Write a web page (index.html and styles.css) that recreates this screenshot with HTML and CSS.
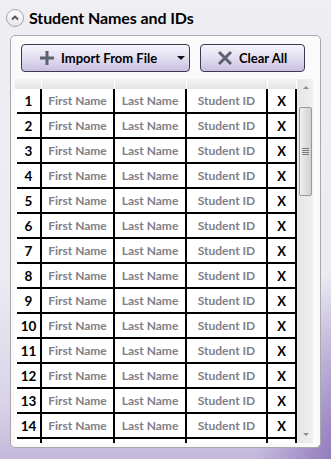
FILE: index.html
```html
<!DOCTYPE html>
<html>
<head>
<meta charset="utf-8">
<link rel="stylesheet" href="styles.css">
</head>
<body>
<div class="page">
  <div class="title-row">
    <span class="collapse">
      <svg width="10" height="8" viewBox="0 0 10 8"><path d="M2 5.5 L5 2.5 L8 5.5" fill="none" stroke="#555" stroke-width="1.8"/></svg>
    </span>
    <span class="title">Student Names and IDs</span>
  </div>
  <div class="panel">
    <div class="buttons">
      <button class="btn btn-import">
        <svg class="ico" width="16" height="16" viewBox="0 0 16 16"><path d="M8 1 V15 M1 8 H15" stroke="#5d6270" stroke-width="3"/></svg>
        <span class="btn-text">Import From File</span>
        <span class="caret"></span>
      </button>
      <button class="btn btn-clear">
        <svg class="ico" width="16" height="16" viewBox="0 0 16 16"><path d="M2 2 L14 14 M14 2 L2 14" stroke="#5d6270" stroke-width="3"/></svg>
        <span class="btn-text">Clear All</span>
      </button>
    </div>
    <div class="grid-wrap">
      <div class="grid">
        <div class="head">
          <div class="hc c1"></div><div class="hc c2"></div><div class="hc c3"></div><div class="hc c4"></div><div class="hc c5"></div>
        </div>
        <div class="rows" id="rows"></div>
      </div>
      <div class="scrollbar">
        <div class="arrow up"></div>
        <div class="track">
          <div class="thumb"><div class="grip"></div></div>
        </div>
        <div class="arrow down"></div>
      </div>
    </div>
  </div>
</div>
<script>
  var rows = document.getElementById('rows');
  var html = '';
  for (var i = 1; i <= 14; i++) {
    html += '<div class="row"><div class="cell c1 num">' + i + '</div><div class="cell c2 ph">First Name</div><div class="cell c3 ph">Last Name</div><div class="cell c4 ph">Student ID</div><div class="cell c5 x">X</div></div>';
  }
  html += '<div class="row"><div class="cell c1"></div><div class="cell c2"></div><div class="cell c3"></div><div class="cell c4"></div><div class="cell c5"></div></div>';
  rows.innerHTML = html;
</script>
</body>
</html>
```

FILE: styles.css
```css
html, body {
  margin: 0;
  padding: 0;
}
body {
  width: 331px;
  height: 459px;
  overflow: hidden;
  font-family: Lato, "Open Sans", sans-serif;
  background:
    radial-gradient(ellipse 90px 200px at 345px 470px, rgba(130,105,180,0.9), rgba(130,105,180,0) 100%),
    linear-gradient(to bottom, #efeef3 0%, #ecebf2 60%, #d9d2e8 88%, #c4b9dc 100%);
}
.page {
  display: flex;
  flex-direction: column;
}
.title-row {
  display: flex;
  align-items: center;
  height: 35px;
  padding-left: 6px;
  box-sizing: border-box;
}
.collapse {
  width: 16px;
  height: 16px;
  border: 1px solid #a5a5ab;
  border-radius: 50%;
  background: linear-gradient(#ffffff, #e6e6ea);
  display: flex;
  align-items: center;
  justify-content: center;
}
.title {
  margin-left: 5px;
  font-weight: 700;
  font-size: 16px;
  color: #000;
  letter-spacing: -0.1px;
}
.panel {
  margin-left: 10px;
  width: 311px;
  height: 413px;
  box-sizing: border-box;
  border: 1px solid #a9a9ad;
  border-radius: 5px;
  background: #fafafb;
  display: flex;
  flex-direction: column;
}
.buttons {
  display: flex;
  gap: 10px;
  padding: 8px 0 0 10px;
}
.btn {
  height: 28px;
  box-sizing: border-box;
  border: 1px solid #3e3852;
  border-radius: 4px;
  background: linear-gradient(to bottom, #f6f4fc 0%, #e4e0f2 45%, #c9c0e2 100%);
  display: flex;
  align-items: center;
  padding: 0;
  font-family: Lato, "Open Sans", sans-serif;
  font-weight: 700;
  font-size: 13px;
  color: #000;
}
.btn-import {
  width: 169px;
  padding-left: 17px;
}
.btn-clear {
  width: 105px;
  padding-left: 16px;
}
.btn-text {
  margin-left: 6px;
}
.caret {
  margin-left: auto;
  margin-right: 4px;
  width: 0;
  height: 0;
  border-left: 4px solid transparent;
  border-right: 4px solid transparent;
  border-top: 4px solid #111;
}
.grid-wrap {
  margin: 7px 0 0 4px;
  width: 298px;
  height: 364px;
  display: flex;
  overflow: hidden;
}
.grid {
  width: 282px;
  overflow: hidden;
  background: #fff;
  padding-left: 2px;
  box-sizing: border-box;
}
.head {
  display: flex;
  height: 10px;
  margin-left: -2px;
}
.head .c1 { width: 27px; }
.hc {
  box-sizing: border-box;
  background: linear-gradient(#f4f4f4, #e3e3e3);
  border-right: 1px solid #fdfdfd;
}
.c1 { width: 25px; }
.c2 { width: 73px; }
.c3 { width: 72px; }
.c4 { width: 81px; }
.c5 { width: 29px; }
.row {
  display: flex;
  height: 25px;
  box-sizing: border-box;
  border-bottom: 2px solid #000;
}
.cell {
  box-sizing: border-box;
  border-right: 2px solid #000;
  display: flex;
  align-items: center;
  justify-content: center;
  font-weight: 700;
  font-size: 13px;
}
.num {
  color: #000;
  font-size: 13.5px;
}
.ph {
  color: #80808a;
  font-size: 12px;
}
.x {
  color: #000;
  font-size: 13px;
}
.scrollbar {
  width: 16px;
  display: flex;
  flex-direction: column;
  background: linear-gradient(to right, #e6e6e6, #f0f0f0);
  border-left: 1px solid #ececec;
  box-sizing: border-box;
}
.arrow {
  height: 17px;
  display: flex;
  align-items: center;
  justify-content: center;
}
.arrow.up::before {
  content: "";
  border-left: 3px solid transparent;
  border-right: 3px solid transparent;
  border-bottom: 3px solid #8e8e8e;
}
.arrow.down::before {
  content: "";
  border-left: 3px solid transparent;
  border-right: 3px solid transparent;
  border-top: 3px solid #8e8e8e;
}
.track {
  flex: 1;
  padding-top: 11px;
}
.thumb {
  margin-left: 1px;
  width: 13px;
  height: 89px;
  box-sizing: border-box;
  border: 1px solid #9a9a9a;
  border-radius: 2px;
  background: linear-gradient(to right, #f1f1f1, #dcdcdc 60%, #d2d2d2);
  display: flex;
  align-items: center;
  justify-content: center;
}
.grip {
  width: 7px;
  height: 7px;
  background: repeating-linear-gradient(to bottom, #7a7a7a 0 1px, transparent 1px 2px);
}
```
